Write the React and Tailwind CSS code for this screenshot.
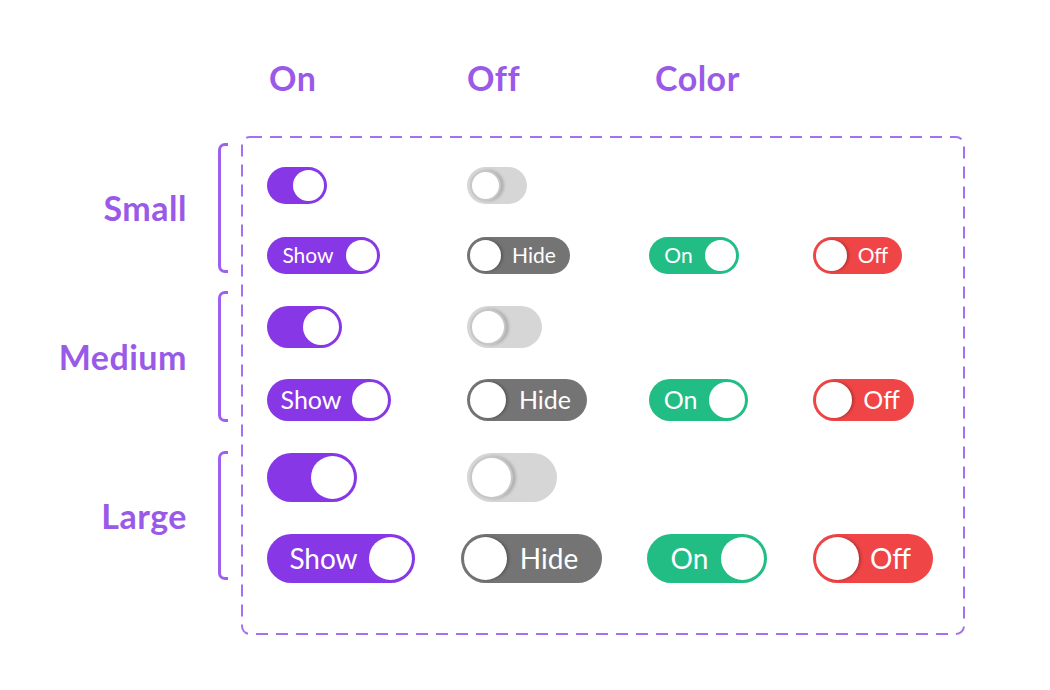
import React from "react";

// sizes: s / m / l
const TRACK = {
  s: "h-[37px]",
  m: "h-[42px]",
  l: "h-[49px]",
};
const KNOB = {
  s: "w-[31px] h-[31px]",
  m: "w-[36px] h-[36px]",
  l: "w-[43px] h-[43px]",
};
const TEXT = {
  s: "text-[21px]",
  m: "text-[25px]",
  l: "text-[28px]",
};

function Knob({ size, shadow }) {
  return (
    <span
      className={
        "block shrink-0 rounded-full bg-white " +
        KNOB[size] +
        (shadow ? " shadow-[2px_0_3px_rgba(0,0,0,0.25)]" : "")
      }
    />
  );
}

function Plain({ on, size, w }) {
  if (on) {
    return (
      <div className={"flex items-center justify-end rounded-full bg-[#8737e5] p-[3px] " + TRACK[size] + " " + w}>
        <Knob size={size} />
      </div>
    );
  }
  return (
    <div className={"flex items-center rounded-full bg-[#d6d6d6] p-[3px] " + TRACK[size] + " " + w}>
      <span
        className={
          "block shrink-0 rounded-full border-2 border-[#c7c7c7] bg-white shadow-[3px_0_3px_rgba(0,0,0,0.18)] " +
          KNOB[size]
        }
      />
    </div>
  );
}

function Labeled({ text, right, bg, size, w, className = "" }) {
  const pad = size === "l" ? (right ? "pl-[8px]" : "pr-[8px]") : "";
  const label = (
    <span className={"-mt-[2px] flex-1 text-center leading-none text-white " + TEXT[size] + " " + pad}>{text}</span>
  );
  return (
    <div className={"flex items-center rounded-full p-[3px] " + bg + " " + TRACK[size] + " " + w + " " + className}>
      {right ? (
        <>
          {label}
          <Knob size={size} />
        </>
      ) : (
        <>
          <Knob size={size} shadow />
          {label}
        </>
      )}
    </div>
  );
}

const PURPLE = "bg-[#8737e5]";
const GRAY = "bg-[#747474]";
const GREEN = "bg-[#21bd85]";
const RED = "bg-[#ef4546]";

function Row({ h, mt, children }) {
  return (
    <div className={"grid grid-cols-[200px_182px_164px_1fr] items-center " + h + " " + mt}>{children}</div>
  );
}

function Group({ label, h, mt }) {
  return (
    <div className={"flex items-center " + h + " " + mt}>
      <span className="text-[34px] font-bold leading-8 tracking-[0.5px] text-[#9a5ae8]">{label}</span>
      <span className="ml-[31px] block h-full w-[10px] rounded-l-[7px] border-[3px] border-r-0 border-[#9d60ef]" />
    </div>
  );
}

export default function App() {
  return (
    <div className="relative h-[690px] w-[1050px] bg-white font-['Lato',sans-serif]">
      <div className="flex pl-[269px] pt-[62px] text-[34px] font-bold leading-8 tracking-[0.5px] text-[#9a5ae8]">
        <span className="w-[198px]">On</span>
        <span className="w-[188px]">Off</span>
        <span>Color</span>
      </div>

      <div className="mt-[42px] flex">
        <div className="flex w-[228px] flex-col items-end pt-[7px]">
          <Group label="Small" h="h-[130px]" mt="" />
          <Group label="Medium" h="h-[131px]" mt="mt-[18px]" />
          <Group label="Large" h="h-[129px]" mt="mt-[29px]" />
        </div>

        <div className="relative ml-[13px] h-[499px] w-[724px] pl-[26px] pt-[31px]">
          <svg className="absolute inset-0" width="724" height="499">
            <rect
              x="1"
              y="1"
              width="722"
              height="497"
              rx="8"
              fill="none"
              stroke="#a46ff0"
              strokeWidth="2"
              strokeDasharray="12 8"
            />
          </svg>

          <Row h="h-[37px]" mt="">
            <Plain on size="s" w="w-[60px]" />
            <Plain size="s" w="w-[60px]" />
          </Row>
          <Row h="h-[37px]" mt="mt-[33px]">
            <Labeled text="Show" right bg={PURPLE} size="s" w="w-[113px]" />
            <Labeled text="Hide" bg={GRAY} size="s" w="w-[103px]" />
            <Labeled text="On" right bg={GREEN} size="s" w="w-[90px]" />
            <Labeled text="Off" bg={RED} size="s" w="w-[89px]" />
          </Row>

          <Row h="h-[41px]" mt="mt-[32px]">
            <Plain on size="m" w="w-[75px]" />
            <Plain size="m" w="w-[75px]" />
          </Row>
          <Row h="h-[42px]" mt="mt-[32px]">
            <Labeled text="Show" right bg={PURPLE} size="m" w="w-[124px]" />
            <Labeled text="Hide" bg={GRAY} size="m" w="w-[120px]" />
            <Labeled text="On" right bg={GREEN} size="m" w="w-[99px]" />
            <Labeled text="Off" bg={RED} size="m" w="w-[101px]" />
          </Row>

          <Row h="h-[49px]" mt="mt-[32px]">
            <Plain on size="l" w="w-[90px]" />
            <Plain size="l" w="w-[90px]" />
          </Row>
          <Row h="h-[49px]" mt="mt-[32px]">
            <Labeled text="Show" right bg={PURPLE} size="l" w="w-[148px]" />
            <Labeled text="Hide" bg={GRAY} size="l" w="w-[141px]" className="-ml-[6px]" />
            <Labeled text="On" right bg={GREEN} size="l" w="w-[120px]" className="-ml-[2px]" />
            <Labeled text="Off" bg={RED} size="l" w="w-[120px]" />
          </Row>
        </div>
      </div>
    </div>
  );
}
